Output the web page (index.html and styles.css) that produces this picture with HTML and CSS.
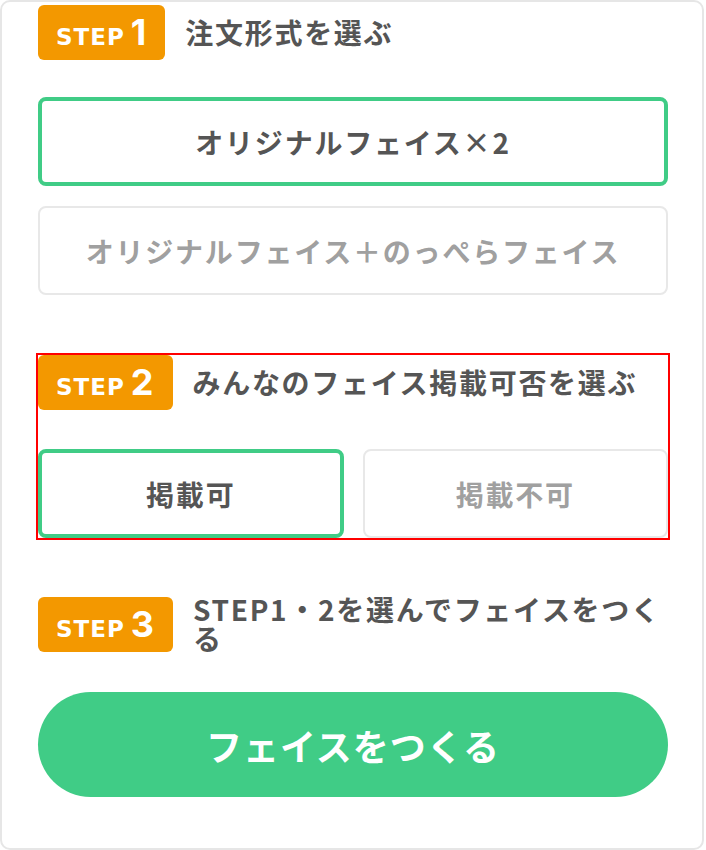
FILE: index.html
```html
<!DOCTYPE html>
<html lang="ja">
<head>
<meta charset="utf-8">
<title>フェイスをつくる</title>
<link rel="stylesheet" href="styles.css">
</head>
<body>
<div class="card">
  <section class="step step-1">
    <div class="step-head">
      <span class="badge"><span class="badge-word">STEP</span><span class="badge-num">1</span></span>
      <h2 class="step-title">注文形式を選ぶ</h2>
    </div>
    <div class="options">
      <button class="opt is-active">オリジナルフェイス×2</button>
      <button class="opt">オリジナルフェイス＋のっぺらフェイス</button>
    </div>
  </section>

  <section class="step step-2 highlighted">
    <div class="step-head">
      <span class="badge"><span class="badge-word">STEP</span><span class="badge-num">2</span></span>
      <h2 class="step-title">みんなのフェイス掲載可否を選ぶ</h2>
    </div>
    <div class="options options-2col">
      <button class="opt is-active">掲載可</button>
      <button class="opt">掲載不可</button>
    </div>
  </section>

  <section class="step step-3">
    <div class="step-head">
      <span class="badge"><span class="badge-word">STEP</span><span class="badge-num">3</span></span>
      <h2 class="step-title">STEP1・2を選んでフェイスをつくる</h2>
    </div>
    <button class="make-btn">フェイスをつくる</button>
  </section>
</div>
</body>
</html>
```

FILE: styles.css
```css
* { box-sizing: border-box; }
html, body { margin: 0; padding: 0; background: #fff; }
body {
  font-family: "Noto Sans CJK JP", "Noto Sans", sans-serif;
  color: #555;
}
.card {
  width: 704px;
  height: 850px;
  border: 2px solid #e6e6e6;
  border-radius: 10px;
  padding: 3px 34px 0 36px;
  display: flex;
  flex-direction: column;
}
.step { display: flex; flex-direction: column; }
.step-head {
  display: flex;
  align-items: center;
  gap: 20px;
}
.badge {
  flex: none;
  display: inline-flex;
  align-items: baseline;
  justify-content: flex-start;
  height: 55px;
  padding: 9px 19px 0 18px;
  background: #f39800;
  border-radius: 6px;
  color: #fff;
  font-weight: 700;
}
.badge-word {
  font-family: "DejaVu Sans", sans-serif;
  font-size: 23px;
  letter-spacing: 1px;
  margin-right: 6px;
  line-height: 1;
}
.badge-num {
  font-family: Inter, "Noto Sans", sans-serif;
  font-size: 36px;
  line-height: 1;
}
.step-title {
  margin: 0;
  font-size: 28px;
  font-weight: 700;
  letter-spacing: 1.7px;
  line-height: 29px;
  color: #555;
}
.options { display: flex; flex-direction: column; gap: 20px; margin-top: 37px; }
.options-2col { display: grid; grid-template-columns: 1fr 1fr; gap: 19px; margin-top: 39px; }
.opt {
  height: 89px;
  border: 2px solid #e8e8e8;
  border-radius: 8px;
  background: #fff;
  font-family: "Noto Sans CJK JP", sans-serif;
  font-size: 28px;
  font-weight: 700;
  letter-spacing: 1.8px;
  color: #a0a0a0;
  padding: 0;
}
.opt.is-active { border: 4px solid #40cc86; color: #555; }
.step-2 { margin-top: 60px; }
.step-3 { margin-top: 57px; }
.highlighted { outline: 2px solid #ff0000; }
.make-btn {
  margin-top: 39px;
  height: 105px;
  border: none;
  border-radius: 53px;
  background: #40cc86;
  color: #fff;
  font-family: "Noto Sans CJK JP", sans-serif;
  font-size: 36px;
  font-weight: 700;
  letter-spacing: 1px;
}
```
